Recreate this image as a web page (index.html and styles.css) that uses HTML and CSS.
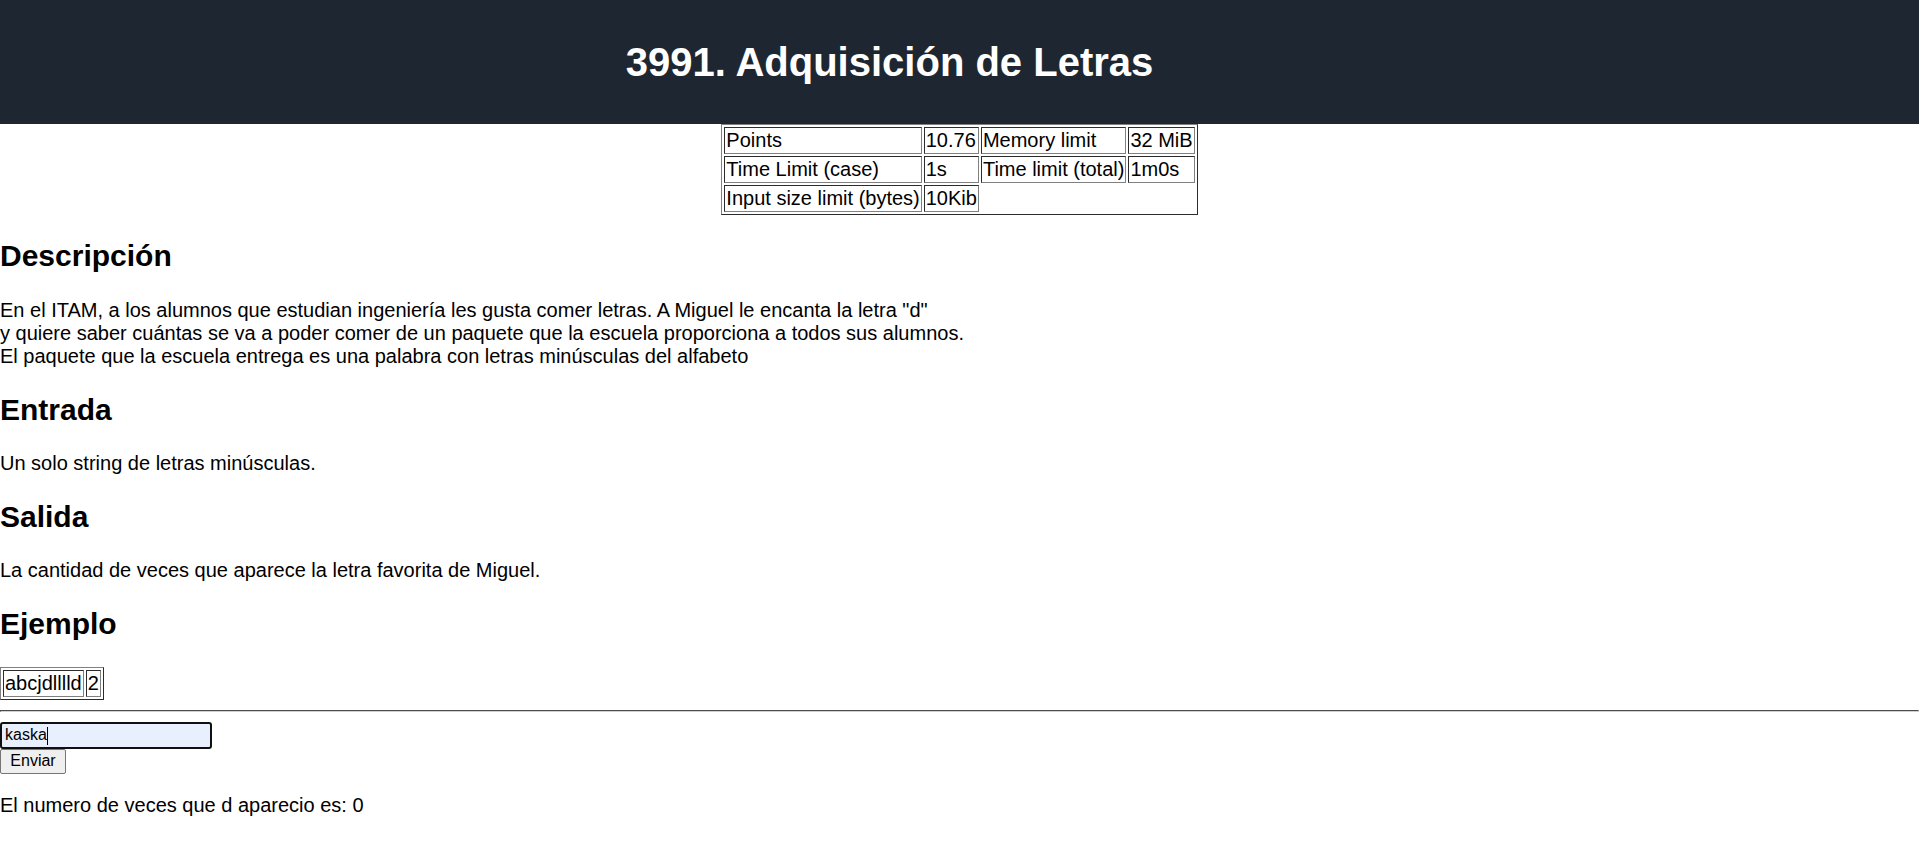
FILE: index.html
```html
<!DOCTYPE html>
<html lang="es">
<head>
<meta charset="utf-8">
<title>3991. Adquisición de Letras</title>
<link rel="stylesheet" href="styles.css">
</head>
<body>
<header class="topbar">
  <h1 class="title">3991. Adquisición de Letras</h1>
</header>
<table class="limits">
  <tr><td>Points</td><td>10.76</td><td>Memory limit</td><td>32 MiB</td></tr>
  <tr><td>Time Limit (case)</td><td>1s</td><td>Time limit (total)</td><td>1m0s</td></tr>
  <tr><td>Input size limit (bytes)</td><td>10Kib</td></tr>
</table>
<main class="content">
  <h2>Descripción</h2>
  <p>En el ITAM, a los alumnos que estudian ingeniería les gusta comer letras. A Miguel le encanta la letra "d"<br>y quiere saber cuántas se va a poder comer de un paquete que la escuela proporciona a todos sus alumnos.<br>El paquete que la escuela entrega es una palabra con letras minúsculas del alfabeto</p>
  <h2>Entrada</h2>
  <p>Un solo string de letras minúsculas.</p>
  <h2>Salida</h2>
  <p>La cantidad de veces que aparece la letra favorita de Miguel.</p>
  <h2>Ejemplo</h2>
  <table class="example">
    <tr><td>abcjdlllld</td><td>2</td></tr>
  </table>
  <hr class="divider">
  <form class="answer">
    <span class="field"><input class="text-input" type="text" value="kaska"><span class="caret"></span></span>
    <button class="send" type="button">Enviar</button>
  </form>
  <p>El numero de veces que d aparecio es: 0</p>
</main>
</body>
</html>
```
FILE: styles.css
```css
html, body {
  margin: 0;
  padding: 0;
}
body {
  font-family: "Liberation Sans", Arial, sans-serif;
  font-size: 20px;
  line-height: 1.15;
  color: #000;
  background: #fff;
}
.topbar {
  background: #1e2731;
  color: #fff;
  padding: 12px 140px 12px 0;
  text-align: center;
}
.title {
  font-size: 40px;
  font-weight: bold;
  margin: 26.8px 0;
}
table {
  border: 1px outset gray;
  border-spacing: 2px;
  font-size: 20px;
}
td {
  border: 1px inset gray;
  padding: 1px;
  text-align: left;
}
.limits {
  margin: 0 auto;
}
.content h2 {
  font-size: 30px;
  font-weight: bold;
  margin: 24.9px 0;
}
.content p {
  margin: 20px 0;
}
.example {
  margin: 0;
}
.divider {
  margin: 10px 0;
  border: 1px inset #aaa;
  border-color: #a0a0a0 #d0d0d0 #d0d0d0 #a0a0a0;
  height: 0;
}
.answer {
  display: flex;
  flex-direction: column;
  align-items: flex-start;
  margin: 0;
}
.field {
  position: relative;
  display: block;
}
.text-input {
  box-sizing: border-box;
  width: 212px;
  height: 27px;
  border: 2px solid #101010;
  border-radius: 3px;
  background: #e8f0fe;
  font-family: "Liberation Sans", Arial, sans-serif;
  font-size: 16px;
  color: #000;
  padding: 0 3px;
  outline: none;
  display: block;
}
.caret {
  position: absolute;
  left: 47px;
  top: 5px;
  width: 1px;
  height: 18px;
  background: #000;
}
.send {
  box-sizing: border-box;
  width: 66px;
  height: 25px;
  padding: 0;
  border: 1px solid #767676;
  border-radius: 2px;
  background: #efefef;
  font-family: "Liberation Sans", Arial, sans-serif;
  font-size: 16px;
  color: #000;
}
```
